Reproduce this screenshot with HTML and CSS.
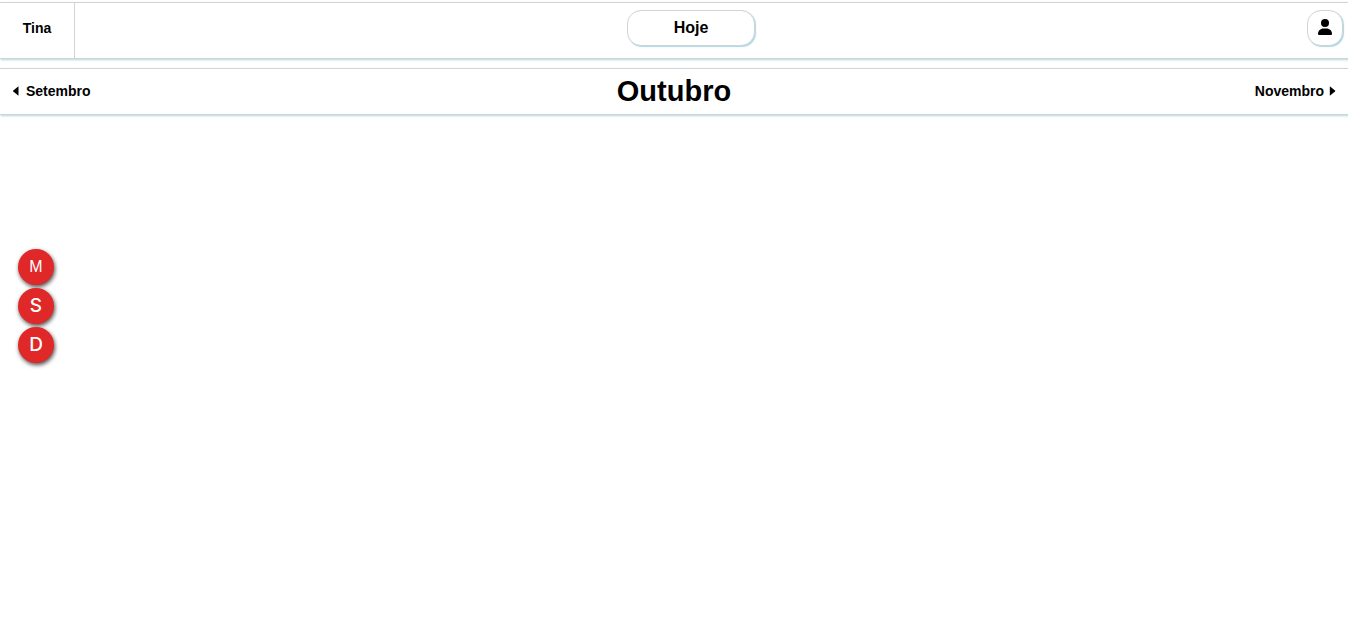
FILE: index.html
```html
<!DOCTYPE html>
<html lang="pt-BR">
<head>
<meta charset="utf-8">
<meta name="viewport" content="width=device-width, initial-scale=1">
<title>Agenda</title>
<link rel="stylesheet" href="styles.css">
</head>
<body class="page">
<header class="topbar">
  <div class="brand">Tina</div>
  <button class="pill today" type="button">Hoje</button>
  <button class="pill user" type="button" aria-label="Perfil">
    <svg class="user-icon" viewBox="0 0 14 16" aria-hidden="true"><circle cx="7" cy="4" r="4"/><path d="M0 15c0-3.200 2.400-5.500 5.500-5.500h3c3.100 0 5.500 2.300 5.500 5.500q0 1-1 1H1q-1 0-1-1z"/></svg>
  </button>
</header>
<nav class="months">
  <button class="month-link" type="button"><svg class="caret" viewBox="0 0 7 10" aria-hidden="true"><path d="M6.500 .3v9.400L1.300 5.500q-.6-.5 0-1z"/></svg>Setembro</button>
  <h1 class="month">Outubro</h1>
  <button class="month-link next" type="button">Novembro<svg class="caret" viewBox="0 0 7 10" aria-hidden="true"><path d="M.8 .3v9.400l5.200-4.200q.6-.5 0-1z"/></svg></button>
</nav>
<main class="views">
  <button class="view view-small" type="button">M</button>
  <button class="view" type="button">S</button>
  <button class="view" type="button">D</button>
</main>
</body>
</html>
```
FILE: styles.css
```css
* { box-sizing: border-box; }
.page {
  margin: 0;
  padding-top: 2px;
  background: #fff;
  color: #000;
  font-family: "Liberation Sans", Arial, sans-serif;
  font-size: 14px;
  font-weight: bold;
}
.topbar, .months {
  display: flex;
  align-items: center;
  justify-content: space-between;
  border: solid lightgray;
  border-width: 1px 0;
  box-shadow: 1px 1px 2px lightblue;
}
.topbar { height: 57px; padding-right: 5px; }
.brand {
  display: flex;
  align-items: center;
  justify-content: center;
  align-self: stretch;
  width: 75px;
  padding-bottom: 5px;
  border-right: 1px solid lightgray;
}
.pill {
  display: flex;
  align-items: center;
  justify-content: center;
  height: 36px;
  margin: 0 0 5px;
  padding: 0;
  border: 1px solid lightgray;
  border-radius: 14px;
  background: #fff;
  color: #000;
  font: inherit;
  box-shadow: 1px 1px 1px lightblue;
}
.today { width: 128px; font-size: 16px; }
.user { width: 36px; }
.user-icon { width: 14px; height: 16px; margin-bottom: 2px; }
.months {
  display: grid;
  grid-template-columns: 1fr auto 1fr;
  height: 47px;
  margin-top: 9px;
  padding: 0 12px 2px;
}
.month-link {
  display: flex;
  align-items: center;
  justify-self: start;
  gap: 7px;
  padding: 0;
  border: 0;
  background: none;
  color: #000;
  font: inherit;
}
.next { justify-self: end; gap: 5px; }
.caret { width: 7px; height: 10px; }
.month { margin: 0; font-size: 29px; line-height: 32px; }
.views {
  display: flex;
  flex-direction: column;
  align-items: flex-start;
  gap: 3px;
  padding: 134px 18px 16px;
}
.view {
  width: 36px;
  height: 36px;
  padding: 0;
  border: 0;
  border-radius: 50%;
  background: #e02828;
  color: #fff;
  font: 500 19px/36px Inter, sans-serif;
  box-shadow: 1px 2px 4px rgba(0, 0, 0, .7);
}
.view-small { font: 16px/36px "Liberation Sans", Arial, sans-serif; }
```
